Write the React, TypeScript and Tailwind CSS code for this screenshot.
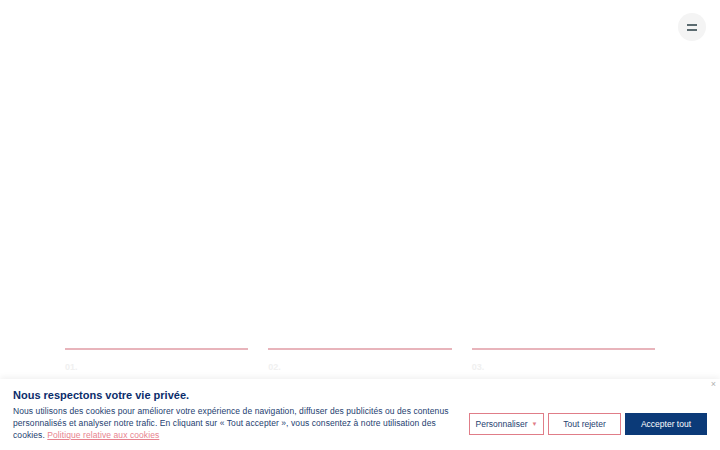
import React from 'react';

const steps = ['01.', '02.', '03.'];

export default function App() {
  return (
    <div
      className="relative w-[720px] h-[450px] overflow-hidden bg-white"
      style={{ fontFamily: '"Liberation Sans", Arial, sans-serif' }}
    >
      {/* Header */}
      <div className="flex justify-end pt-[13px] pr-[14px]">
        <button
          aria-label="Menu"
          className="w-[28px] h-[28px] rounded-full bg-[#f4f4f4] flex flex-col items-center justify-center gap-[3px]"
        >
          <span className="block w-[10px] h-[2px] bg-[#5b6b70]" />
          <span className="block w-[10px] h-[2px] bg-[#5b6b70]" />
        </button>
      </div>

      {/* Steps */}
      <div className="mt-[307px] px-[65px] grid grid-cols-3 gap-x-[20px]">
        {steps.map((s) => (
          <div key={s}>
            <div className="h-[2px] bg-[#e8b4bb]" />
            <div className="mt-[11px] text-[9px] font-bold text-[#f0f0f0]">{s}</div>
          </div>
        ))}
      </div>

      {/* Cookie banner */}
      <div className="absolute left-0 right-0 bottom-0 h-[71px] bg-white shadow-[0_-2px_6px_rgba(0,0,0,0.06)] flex items-start px-[13px] pt-[9px]">
        <div className="flex-1">
          <h2 className="text-[11px] font-black text-[#0b2d6b] leading-[14px]">
            Nous respectons votre vie privée.
          </h2>
          <p className="mt-[3px] text-[8.5px] leading-[12px] tracking-[0.08px] text-[#24406f] whitespace-nowrap">
            Nous utilisons des cookies pour améliorer votre expérience de navigation, diffuser des publicités ou des contenus
            <br />
            personnalisés et analyser notre trafic. En cliquant sur « Tout accepter », vous consentez à notre utilisation des
            <br />
            cookies.{' '}
            <a className="text-[#e8838f] underline">Politique relative aux cookies</a>
          </p>
        </div>
        <div className="flex items-center gap-[4px] mt-[25px]">
          <button className="w-[75px] h-[22px] border border-[#e07d88] text-[#24406f] text-[8.5px] flex items-center justify-center gap-[4px]">
            Personnaliser
            <span className="text-[#e07d88] text-[6px]">▼</span>
          </button>
          <button className="w-[73px] h-[22px] border border-[#e07d88] text-[#24406f] text-[8.5px]">
            Tout rejeter
          </button>
          <button className="w-[82px] h-[22px] bg-[#0b3a78] text-white text-[8.5px]">
            Accepter tout
          </button>
        </div>
        <button
          aria-label="Fermer"
          className="absolute right-[4px] top-[1px] text-[9px] leading-none text-[#b0b0b0]"
        >
          ×
        </button>
      </div>
    </div>
  );
}
